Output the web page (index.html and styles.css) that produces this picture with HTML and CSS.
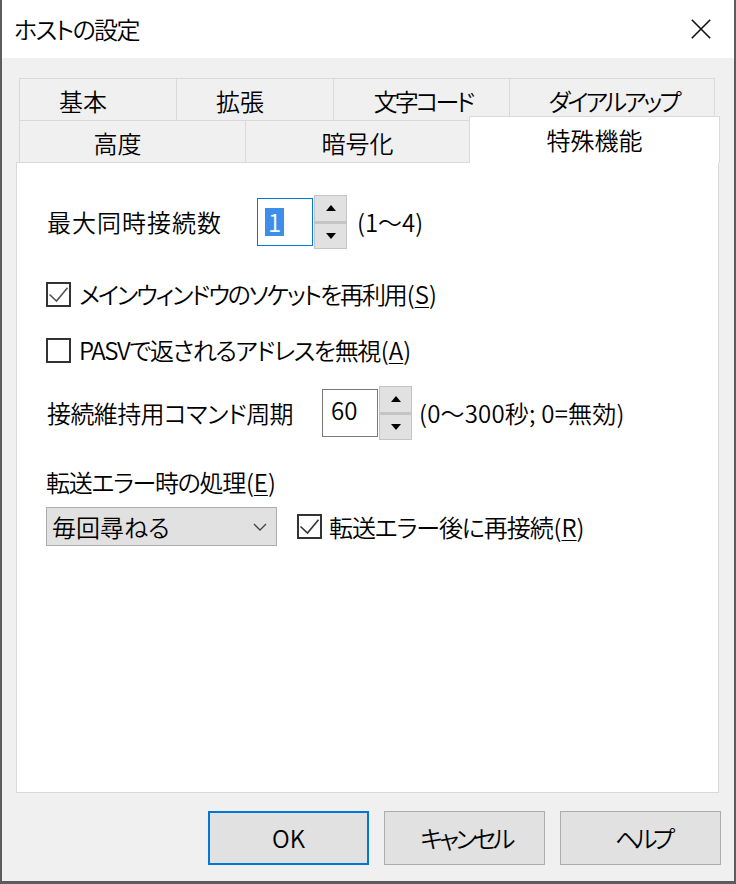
FILE: index.html
```html
<!DOCTYPE html>
<html lang="ja">
<head>
<meta charset="utf-8">
<title>ホストの設定</title>
<link rel="stylesheet" href="styles.css">
</head>
<body>
<div class="window">
  <div class="titlebar">
    <span class="title">ホストの設定</span>
    <svg class="close" width="20" height="20" viewBox="0 0 20 20"><path d="M0.8 0.8 L19.2 19.2 M19.2 0.8 L0.8 19.2" stroke="#111" stroke-width="1.6" fill="none"/></svg>
  </div>
  <div class="tabs">
    <div class="tabrow">
      <div class="tab t-kihon left">基本</div>
      <div class="tab t-kakucho left">拡張</div>
      <div class="tab t-moji"><span class="ls-kana">文字コード</span></div>
      <div class="tab t-dial"><span class="ls-kana">ダイアルアップ</span></div>
    </div>
    <div class="tabrow">
      <div class="tab t-kodo left">高度</div>
      <div class="tab t-ango">暗号化</div>
      <div class="tab t-toku active">特殊機能</div>
    </div>
  </div>
  <div class="panel">
    <div class="row r-spin">
      <span class="lbl lbl-max">最大同時接続数</span>
      <div class="numbox focus"><span class="sel">1</span></div>
      <div class="spinner">
        <div class="spinbtn"><span class="tri-up"></span></div>
        <div class="spinbtn"><span class="tri-down"></span></div>
      </div>
      <span class="hint hint-max">(1～4)</span>
    </div>
    <div class="row r-check r-cb1">
      <span class="check"><svg width="21" height="21" viewBox="0 0 21 21"><polyline points="1.5,10.5 8.5,17 19.5,3.8" fill="none" stroke="#555" stroke-width="1.6"/></svg></span>
      <span class="ls-cb1">メインウィンドウのソケットを再利用<span class="nols">(<u>S</u>)</span></span>
    </div>
    <div class="row r-check r-cb2">
      <span class="check"></span>
      <span class="ls-cb2">PASVで返されるアドレスを無視<span class="nols">(<u>A</u>)</span></span>
    </div>
    <div class="row r-spin r-keep">
      <span class="lbl lbl-keep"><span class="ls-keep">接続維持用コマンド周期</span></span>
      <div class="numbox"><span class="val">60</span></div>
      <div class="spinner">
        <div class="spinbtn"><span class="tri-up"></span></div>
        <div class="spinbtn"><span class="tri-down"></span></div>
      </div>
      <span class="hint hint-keep">(0～300秒; 0=無効)</span>
    </div>
    <div class="row r-label">
      <span class="ls-err">転送エラー時の処理<span class="nols">(<u>E</u>)</span></span>
    </div>
    <div class="row r-last">
      <div class="combo">
        <span>毎回尋ねる</span>
        <svg width="14" height="8" viewBox="0 0 14 8"><polyline points="1,1 7,7 13,1" fill="none" stroke="#444" stroke-width="1.3"/></svg>
      </div>
      <span class="check check-gap"><svg width="21" height="21" viewBox="0 0 21 21"><polyline points="1.5,10.5 8.5,17 19.5,3.8" fill="none" stroke="#333" stroke-width="1.6"/></svg></span>
      <span class="ls-cb3">転送エラー後に再接続<span class="nols">(<u>R</u>)</span></span>
    </div>
  </div>
  <div class="buttons">
    <div class="btn default">OK</div>
    <div class="btn"><span class="ls-cancel">キャンセル</span></div>
    <div class="btn"><span class="ls-help">ヘルプ</span></div>
  </div>
</div>
</body>
</html>
```
FILE: styles.css
```css
* { box-sizing: border-box; }
html, body { margin: 0; padding: 0; }
body {
  background: #5c5c5c;
  width: 736px;
  height: 884px;
  overflow: hidden;
  font-family: "Noto Sans CJK JP", "Noto Sans", sans-serif;
  font-feature-settings: "palt";
  font-weight: 350;
  font-size: 24px;
  color: #000;
}
.window {
  width: 732px;
  height: 881px;
  margin-left: 2px;
  background: #f0f0f0;
  display: flex;
  flex-direction: column;
}
.titlebar {
  height: 58px;
  background: #fff;
  display: flex;
  align-items: center;
  justify-content: space-between;
  padding: 0 23px 0 12px;
}
.title { line-height: 30px; letter-spacing: -1.6px; }
.close { display: block; }

.tabs {
  margin: 20px 15px 0 14px;
  height: 84px;
}
.tabrow {
  display: flex;
  height: 42px;
  padding-left: 3px;
}
.tab {
  height: 42px;
  border: 1px solid #d9d9d9;
  border-bottom: none;
  margin-right: -1px;
  display: flex;
  align-items: center;
  justify-content: center;
  background: #f0f0f0;
  line-height: 30px;
  padding-top: 2px;
}
.tab.left { padding-right: 30px; }
.t-kihon { width: 158px; }
.t-kakucho { width: 158px; }
.t-moji { width: 177px; }
.t-dial { width: 206px; }
.t-kodo { width: 227px; }
.t-ango { width: 225px; }
.t-toku { width: 251px; }
.tab.active {
  background: #fff;
  height: 47px;
  margin-top: -4px;
  padding-top: 0;
  position: relative;
  z-index: 1;
}
.ls-kana { letter-spacing: -3px; margin-right: -3px; }

.panel {
  height: 631px;
  background: #fff;
  border: 1px solid #d9d9d9;
  margin: 0 15px 0 14px;
  padding: 32px 0 0 29px;
  display: flex;
  flex-direction: column;
}
.row {
  display: flex;
  align-items: center;
  line-height: 32px;
}
.r-spin { height: 54px; }
.r-check { height: 32px; }
.r-cb1 { margin-top: 29px; }
.r-cb2 { margin-top: 24px; }
.r-keep { margin-top: 20px; }
.r-label { height: 32px; margin-top: 26px; }
.r-last { height: 39px; margin-top: 9px; }

.lbl { padding-left: 1px; }
.lbl-max { width: 211px; letter-spacing: 1px; }
.lbl-keep { width: 276px; }
.ls-keep { letter-spacing: -0.6px; }
.ls-cb1 { letter-spacing: -2.1px; }
.ls-cb2 { letter-spacing: -1.4px; }
.ls-err { letter-spacing: -1.3px; }
.ls-cb3 { letter-spacing: -1.1px; }
.nols { letter-spacing: 0; margin-left: 1px; }
.hint-keep { letter-spacing: 0.2px; }

.numbox {
  width: 56px;
  height: 48px;
  border: 1px solid #7a7a7a;
  background: #fff;
  display: flex;
  align-items: center;
  padding-left: 8px;
}
.numbox.focus { border-color: #0078d7; padding-left: 7px; }
.sel {
  background: #3d8ee8;
  color: #fff;
  line-height: 28px;
  padding: 0 3px;
}
.val { line-height: 32px; margin-top: -6px; }

.spinner {
  width: 33px;
  height: 54px;
  margin-left: 1px;
  display: flex;
  flex-direction: column;
}
.spinbtn {
  flex: 1;
  background: #e1e1e1;
  border: 1px solid #c4c4c4;
  display: flex;
  align-items: center;
  justify-content: center;
}
.spinbtn + .spinbtn { border-top: 2px solid #c4c4c4; }
.tri-up {
  width: 0; height: 0;
  border-left: 5px solid transparent;
  border-right: 5px solid transparent;
  border-bottom: 6px solid #000;
}
.tri-down {
  width: 0; height: 0;
  border-left: 5px solid transparent;
  border-right: 5px solid transparent;
  border-top: 6px solid #000;
}
.hint-max { margin-left: 10px; }
.hint-keep { margin-left: 7px; }

.check {
  width: 25px;
  height: 25px;
  border: 2px solid #333;
  background: #fff;
  margin-right: 8px;
  display: flex;
  align-items: center;
  justify-content: center;
  flex: none;
}
.check svg { display: block; }
.check-gap { margin-left: 20px; margin-right: 7px; }

.combo {
  width: 231px;
  height: 39px;
  background: #e1e1e1;
  border: 1px solid #adadad;
  display: flex;
  align-items: center;
  justify-content: space-between;
  padding: 0 9px 0 5px;
}
.combo span { line-height: 32px; }

u { text-decoration: underline; text-underline-offset: 3px; text-decoration-thickness: 1px; }

.buttons {
  display: flex;
  justify-content: flex-end;
  gap: 15px;
  margin-top: 18px;
  padding-right: 13px;
}
.btn {
  width: 161px;
  height: 54px;
  background: #e1e1e1;
  border: 1px solid #adadad;
  display: flex;
  align-items: center;
  justify-content: center;
  line-height: 30px;
}
.btn.default { border: 2px solid #0078d7; }
.ls-cancel { letter-spacing: -3.4px; margin-right: -3.4px; }
.ls-help { letter-spacing: -4.5px; margin-right: -4.5px; }
```
